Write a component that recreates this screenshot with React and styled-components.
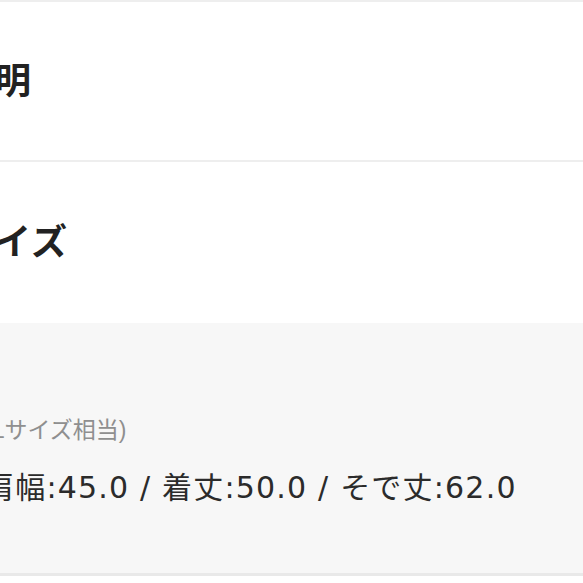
import React from 'react';
import styled, { createGlobalStyle } from 'styled-components';

const GlobalStyle = createGlobalStyle`
  html, body {
    margin: 0;
    padding: 0;
    background: #ffffff;
    overflow: hidden;
  }
  body {
    font-family: "Liberation Sans", "Noto Sans CJK JP", sans-serif;
    color: #222;
  }
`;

// the page is wider than the viewport and shifted left, like the cropped shot
const Page = styled.div`
  margin-left: -42px;
  width: calc(100% + 42px);
  border-top: 2px solid #eeeeee;
`;

const Section = styled.section`
  padding: ${(p) => p.pad || '55px 0 53px'};
  border-bottom: ${(p) => (p.last ? 'none' : '2px solid #eeeeee')};
  background: #fff;
`;

const Heading = styled.h2`
  margin: 0;
  font-size: 36px;
  line-height: 50px;
  font-weight: 700;
  color: #222;
  letter-spacing: 1px;
`;

const SizePanel = styled.div`
  background: #f7f7f7;
  padding: 91px 0 65px 26px;
  border-bottom: 3px solid #e9e9e9;
  display: flex;
  flex-direction: column;
  gap: 22px;
`;

const SizeNote = styled.p`
  margin: 0;
  font-size: 23px;
  line-height: 32px;
  color: #8f8f8f;
`;

const SizeValues = styled.p`
  margin: 0;
  font-family: "DejaVu Sans", "Noto Sans CJK JP", sans-serif;
  font-size: 30px;
  line-height: 40px;
  letter-spacing: 1.2px;
  color: #2b2b2b;
  white-space: nowrap;
`;

export default function App() {
  return (
    <>
      <GlobalStyle />
      <Page>
        <Section>
          <Heading>説明</Heading>
        </Section>
        <Section pad="56px 0 55px" last>
          <Heading>サイズ</Heading>
        </Section>
        <SizePanel>
          <SizeNote>(Lサイズ相当)</SizeNote>
          <SizeValues>肩幅:45.0 / 着丈:50.0 / そで丈:62.0</SizeValues>
        </SizePanel>
      </Page>
    </>
  );
}
